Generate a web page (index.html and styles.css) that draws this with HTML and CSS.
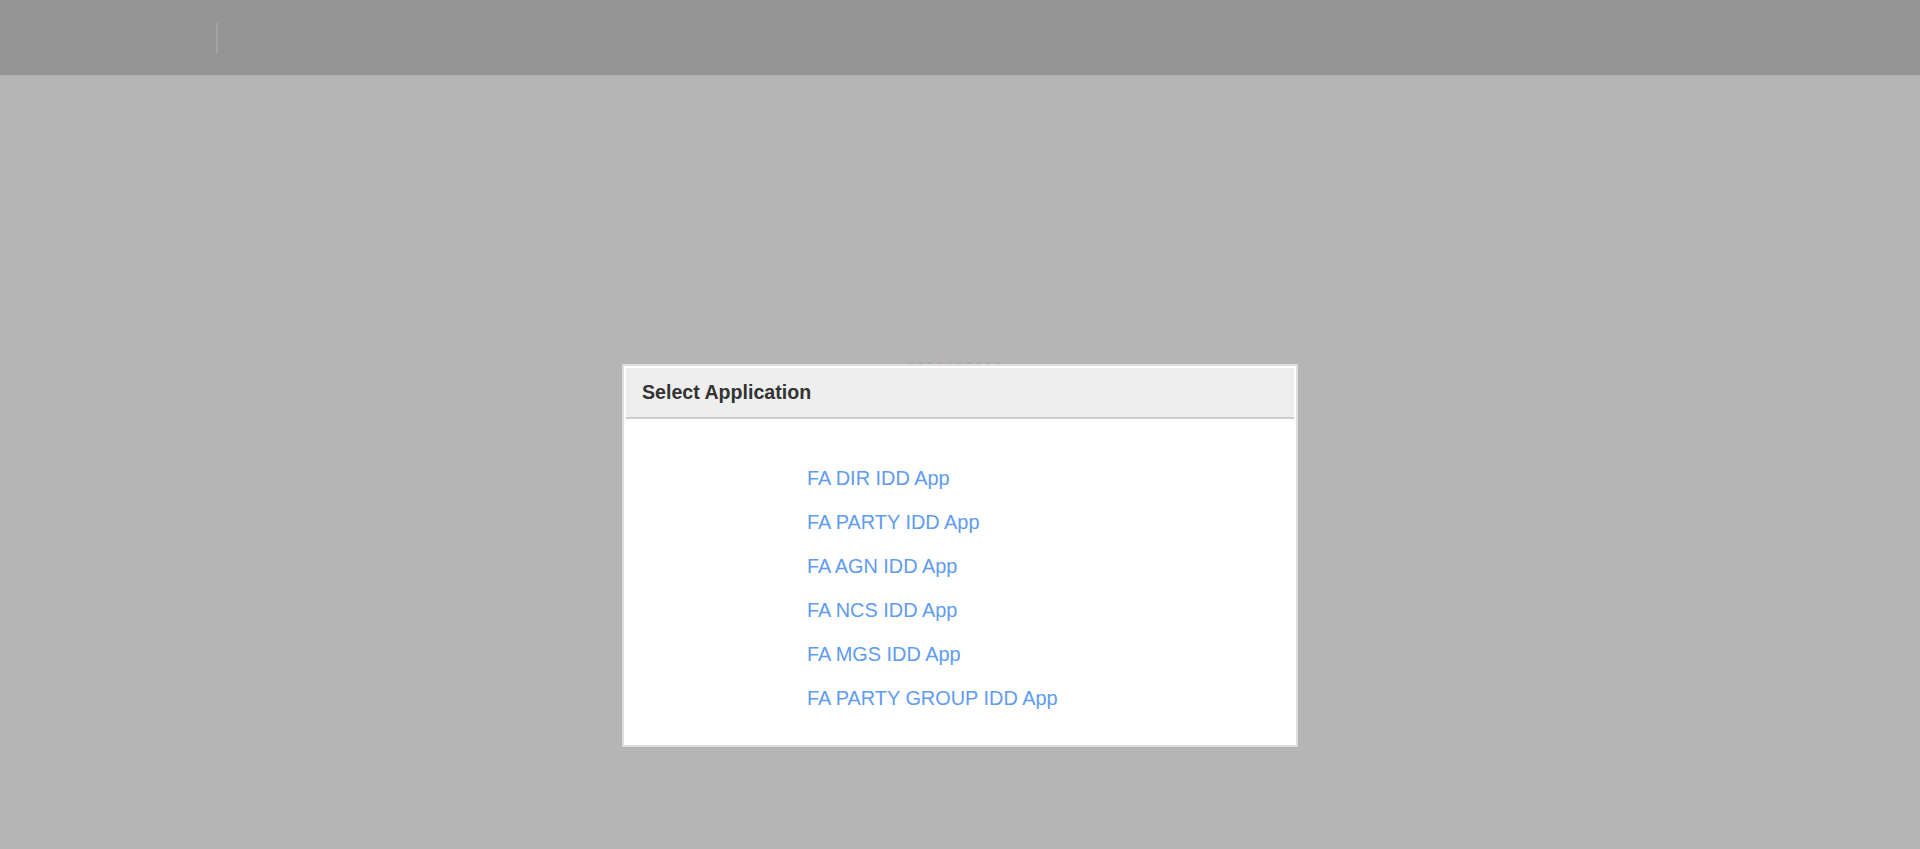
FILE: index.html
```html
<!DOCTYPE html>
<html>
<head>
<meta charset="utf-8">
<title>Select Application</title>
<link rel="stylesheet" href="styles.css">
</head>
<body>
<header class="topbar">
  <div class="brand"></div>
  <div class="divider"></div>
</header>
<main class="stage">
  <div class="loader">
    <span class="dot d1"></span><span class="dot d2"></span><span class="dot d3"></span><span class="dot d4"></span><span class="dot d5"></span><span class="dot d6"></span><span class="dot d7"></span><span class="dot d8"></span><span class="dot d9"></span><span class="dot d10"></span>
  </div>
  <section class="dialog">
    <div class="dialog-head">Select Application</div>
    <div class="dialog-body">
      <a class="app-link" href="#">FA DIR IDD App</a>
      <a class="app-link" href="#">FA PARTY IDD App</a>
      <a class="app-link" href="#">FA AGN IDD App</a>
      <a class="app-link" href="#">FA NCS IDD App</a>
      <a class="app-link" href="#">FA MGS IDD App</a>
      <a class="app-link" href="#">FA PARTY GROUP IDD App</a>
    </div>
  </section>
</main>
</body>
</html>
```

FILE: styles.css
```css
* { box-sizing: border-box; }
html, body {
  margin: 0;
  padding: 0;
  height: 100%;
}
body {
  background: #b5b5b5;
  font-family: "Liberation Sans", Arial, sans-serif;
  overflow: hidden;
}
.topbar {
  height: 75px;
  background: #959595;
  display: flex;
  align-items: flex-start;
}
.brand {
  width: 216px;
  height: 75px;
}
.divider {
  width: 2px;
  height: 30px;
  margin-top: 23px;
  background: #a4a4a4;
}
.stage {
  position: relative;
  display: flex;
  justify-content: center;
  padding-top: 289px;
}
.loader {
  position: absolute;
  top: 287px;
  left: 908px;
  display: flex;
  gap: 4px;
}
.dot {
  width: 5.7px;
  height: 5px;
  border-radius: 50%;
  background: #a9a9b4;
}
.d4, .d5, .d6 { background: #b7a9ad; }
.d1, .d10 { background: #adadb1; }
.dialog {
  position: relative;
  width: 676px;
  height: 383px;
  border: 2px solid #dedede;
  padding: 2px;
  background: #fff;
  display: flex;
  flex-direction: column;
}
.dialog-head {
  height: 51px;
  background: #eeeeee;
  border-bottom: 2px solid #cccccc;
  padding: 1px 0 0 16px;
  line-height: 47px;
  font-size: 19.6px;
  font-weight: bold;
  color: #333333;
}
.dialog-body {
  display: flex;
  flex-direction: column;
  align-items: flex-start;
  padding: 37px 0 0 181px;
}
.app-link {
  display: block;
  line-height: 44px;
  font-size: 19.9px;
  color: #5f9bf0;
  text-decoration: none;
}
```
